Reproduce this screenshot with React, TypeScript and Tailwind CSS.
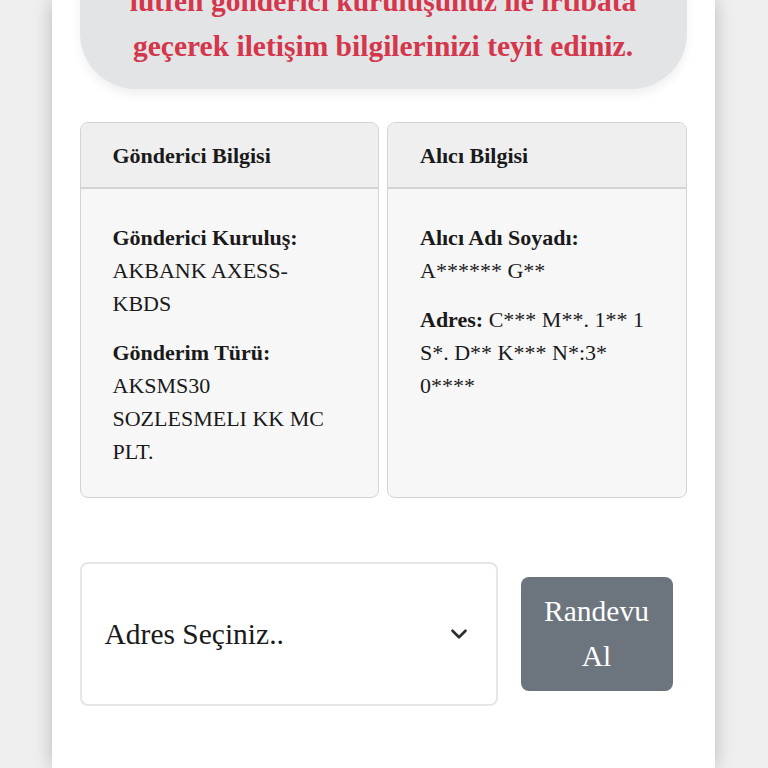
import { ChevronDown } from 'lucide-react';

export default function App() {
  const serif = { fontFamily: '"Liberation Serif", "Times New Roman", serif' };

  return (
    <div className="min-h-[768px] bg-[#efefef] flex justify-center overflow-hidden" style={serif}>
      <div className="w-[663px] ml-[-2px] min-h-[768px] bg-white shadow-[0_0_18px_rgba(0,0,0,0.22)] px-7">
        {/* warning banner */}
        <div className="mt-[-40px] bg-[#e3e4e6] rounded-b-[56px] shadow-[0_6px_10px_rgba(0,0,0,0.06)] pt-[19px] pb-[20px] px-6 text-center">
          <p className="text-[29.5px] leading-[45px] font-bold text-[#d4364b]">
            lütfen gönderici kuruluşunuz ile irtibata geçerek iletişim bilgilerinizi teyit ediniz.
          </p>
        </div>

        {/* info cards */}
        <div className="grid grid-cols-2 gap-2 mt-[33px]">
          <div className="h-[376px] rounded-lg border border-[#d4d4d4] bg-[#f7f7f7] overflow-hidden flex flex-col">
            <div className="h-[66px] shrink-0 bg-[#efeff0] border-b-2 border-[#d4d4d4] px-8 flex items-center">
              <h3 className="text-[22px] font-bold text-[#1a1a1a]">Gönderici Bilgisi</h3>
            </div>
            <div className="px-8 pt-[32px] text-[22px] leading-[33px] text-[#1a1a1a]">
              <p className="mb-4">
                <span className="font-bold">Gönderici Kuruluş:</span>
                <br />
                AKBANK AXESS-KBDS
              </p>
              <p>
                <span className="font-bold">Gönderim Türü:</span>
                <br />
                AKSMS30 SOZLESMELI KK MC PLT.
              </p>
            </div>
          </div>

          <div className="h-[376px] rounded-lg border border-[#d4d4d4] bg-[#f7f7f7] overflow-hidden flex flex-col">
            <div className="h-[66px] shrink-0 bg-[#efeff0] border-b-2 border-[#d4d4d4] px-8 flex items-center">
              <h3 className="text-[22px] font-bold text-[#1a1a1a]">Alıcı Bilgisi</h3>
            </div>
            <div className="px-8 pt-[32px] text-[22px] leading-[33px] text-[#1a1a1a]">
              <p className="mb-4">
                <span className="font-bold">Alıcı Adı Soyadı:</span>
                <br />
                A****** G**
              </p>
              <p>
                <span className="font-bold">Adres:</span> C*** M**. 1** 1 S*. D** K*** N*:3* 0****
              </p>
            </div>
          </div>
        </div>

        {/* address select + button */}
        <div className="flex items-center mt-[64px]">
          <div className="w-[418px] h-[144px] rounded-lg border-2 border-[#e6e6e6] bg-white flex items-center justify-between pl-[23px] pr-[24px]">
            <span className="text-[29.5px] text-[#1a1a1a]">Adres Seçiniz..</span>
            <ChevronDown size={26} strokeWidth={2.4} className="text-[#2b2f33]" />
          </div>
          <button className="ml-[23px] w-[152px] h-[114px] rounded-lg bg-[#6c757d] text-white text-[29.5px] leading-[45px]">
            Randevu
            <br />
            Al
          </button>
        </div>
      </div>
    </div>
  );
}
